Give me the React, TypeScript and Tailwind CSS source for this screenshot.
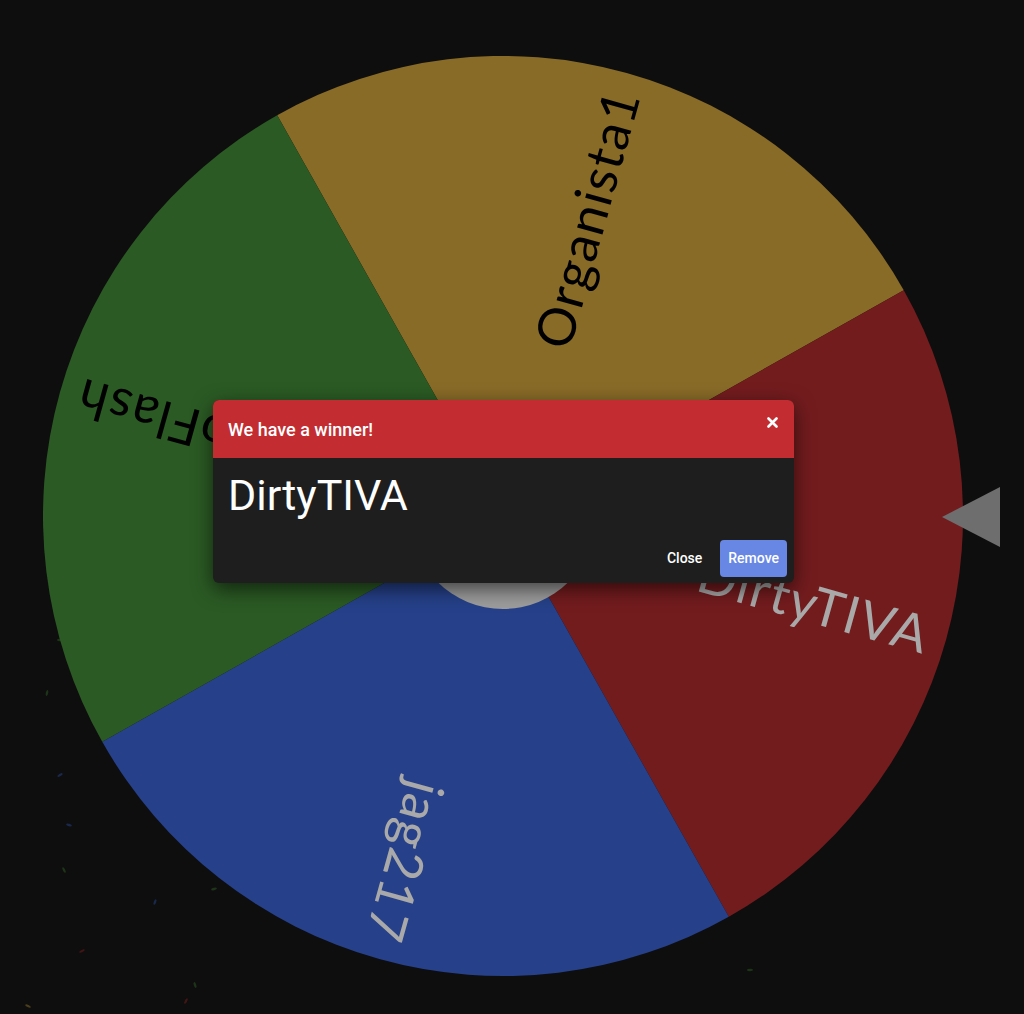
import React from 'react';

type Slice = { label: string; fill: string; text: string };

const slices: Slice[] = [
  { label: 'Organista1', fill: '#896b28', text: '#000000' },
  { label: 'DirtyTIVA', fill: '#731c1e', text: '#a9a9a9' },
  { label: 'jag217', fill: '#26418a', text: '#a9a9a9' },
  { label: 'DoFlash', fill: '#2b5a24', text: '#000000' },
];

const R = 460;
const START = -119.4;

const point = (deg: number, r: number) => {
  const a = (deg * Math.PI) / 180;
  return [R + r * Math.cos(a), R + r * Math.sin(a)];
};

// faint confetti bits left over from the spin
const bits = [
  [60, 640, '#2b5a24'], [105, 606, '#731c1e'], [146, 610, '#896b28'], [173, 679, '#896b28'],
  [196, 728, '#26418a'], [140, 684, '#2b5a24'], [47, 693, '#2b5a24'], [60, 775, '#26418a'],
  [69, 825, '#26418a'], [64, 870, '#2b5a24'], [155, 902, '#26418a'], [82, 951, '#731c1e'],
  [28, 1006, '#896b28'], [195, 985, '#2b5a24'], [186, 1001, '#731c1e'], [214, 889, '#2b5a24'],
  [403, 745, '#26418a'], [520, 730, '#26418a'], [493, 775, '#731c1e'], [535, 620, '#731c1e'],
  [590, 635, '#896b28'], [700, 820, '#26418a'], [735, 805, '#731c1e'], [750, 970, '#2b5a24'],
  [290, 700, '#731c1e'], [560, 850, '#731c1e'], [230, 760, '#896b28'],
] as const;

const Wheel = () => (
  <svg width={920} height={920} viewBox="0 0 920 920" className="block">
    {slices.map((s, i) => {
      const a0 = START + i * 90;
      const a1 = a0 + 90;
      const [x0, y0] = point(a0, R);
      const [x1, y1] = point(a1, R);
      return (
        <path
          key={s.label}
          d={`M${R} ${R} L${x0} ${y0} A${R} ${R} 0 0 1 ${x1} ${y1} Z`}
          fill={s.fill}
        />
      );
    })}
    {slices.map((s, i) => {
      const mid = START + i * 90 + 45;
      return (
        <text
          key={s.label + '-t'}
          x={R + 442}
          y={R}
          transform={`rotate(${mid} ${R} ${R})`}
          textAnchor="end"
          dominantBaseline="central"
          fill={s.text}
          style={{ fontFamily: 'Lato, "Noto Sans", sans-serif', fontSize: 52, fontWeight: 400, letterSpacing: 1.5 }}
        >
          {s.label}
        </text>
      );
    })}
    <circle cx={R} cy={R} r={93} fill="#9d9d9d" />
  </svg>
);

const App = () => {
  return (
    <div className="relative w-full h-[1014px] overflow-hidden bg-[#0e0e0e] pl-[43px] pt-[56px]">
      <svg className="pointer-events-none absolute inset-0" width={1024} height={1014}>
        {bits.map(([x, y, c], i) => (
          <ellipse
            key={i}
            cx={x}
            cy={y}
            rx={3}
            ry={1.2}
            transform={`rotate(${(i * 47) % 180} ${x} ${y})`}
            fill={c}
            opacity={0.5}
          />
        ))}
      </svg>

      <div className="relative w-[920px] h-[920px]">
        <Wheel />

        {/* pointer */}
        <svg className="absolute left-[899px] top-[431px]" width={58} height={60} viewBox="0 0 58 60">
          <polygon points="0,30 58,0 58,60" fill="#6e6e6e" />
        </svg>

        <div className="absolute left-[170px] top-[344px] w-[581px] overflow-hidden rounded-md bg-[#1e1e1e] shadow-[0_6px_20px_rgba(0,0,0,0.6)] font-['Roboto',sans-serif]">
          <div className="flex h-[58px] items-center justify-between bg-[#c32c30] pl-[15px] pr-[12px]">
            <span className="text-[18px] font-medium text-white">We have a winner!</span>
            <button className="flex h-5 w-5 items-center justify-center text-white -mt-[13px]">
              <svg width="11" height="11" viewBox="0 0 11 11">
                <path d="M1.5 1.5 L9.5 9.5 M9.5 1.5 L1.5 9.5" stroke="white" strokeWidth="2.6" strokeLinecap="round" />
              </svg>
            </button>
          </div>
          <div className="px-[15px] pt-[15px] text-[43px] leading-[44px] text-white">DirtyTIVA</div>
          <div className="flex justify-end items-center gap-[10px] px-[7px] pt-[23px] pb-[6px]">
            <button className="h-[37px] px-2 text-[14px] font-medium text-white">Close</button>
            <button className="h-[37px] rounded-[4px] bg-[#6886e3] px-[8px] text-[14px] font-medium text-white">
              Remove
            </button>
          </div>
        </div>
      </div>
    </div>
  );
};

export default App;
